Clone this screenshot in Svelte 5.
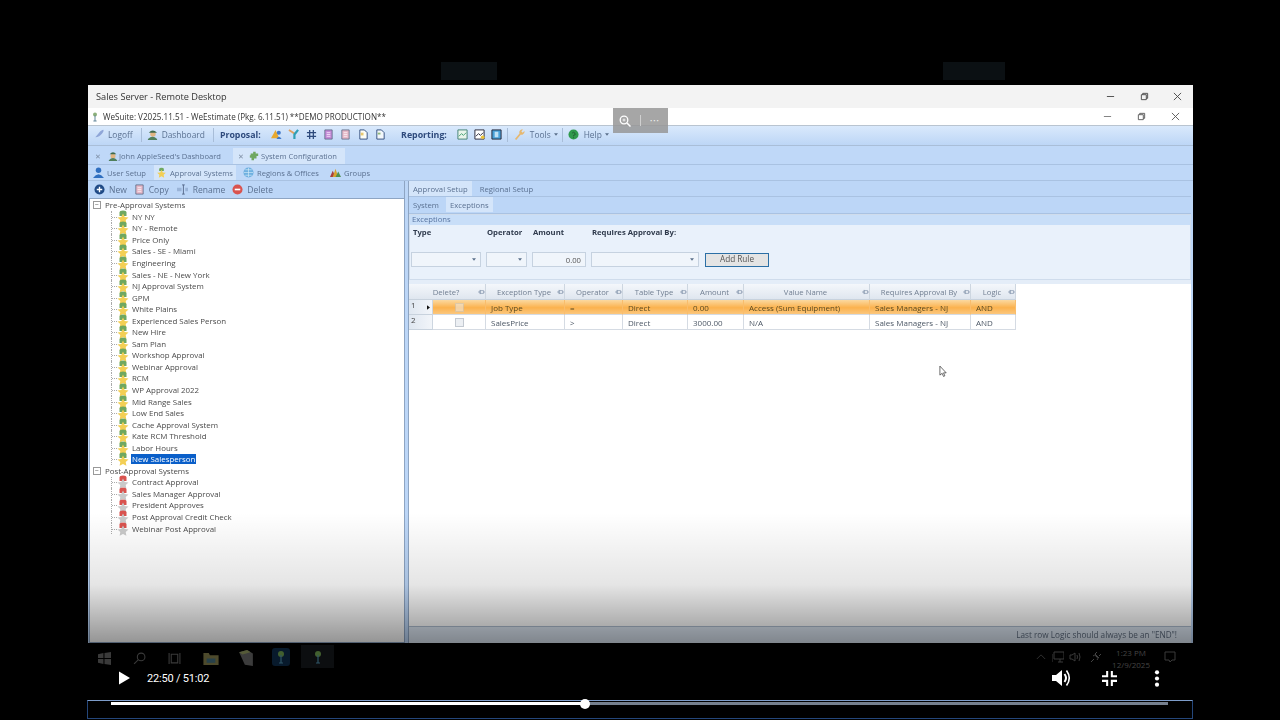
<script lang="ts">
  // Remote desktop video frame: WeSuite approval exceptions screen with player controls on top.
  const preApproval = [
    'NY NY', 'NY - Remote', 'Price Only', 'Sales - SE - Miami', 'Engineering', 'Sales - NE - New York',
    'NJ Approval System', 'GPM', 'White Plains', 'Experienced Sales Person', 'New Hire', 'Sam Plan',
    'Workshop Approval', 'Webinar Approval', 'RCM', 'WP Approval 2022', 'Mid Range Sales', 'Low End Sales',
    'Cache Approval System', 'Kate RCM Threshold', 'Labor Hours', 'New Salesperson',
  ];
  const postApproval = [
    'Contract Approval', 'Sales Manager Approval', 'President Approves', 'Post Approval Credit Check', 'Webinar Post Approval',
  ];
  const columns = [
    { label: 'Delete?', w: 53, first: true },
    { label: 'Exception Type', w: 79 },
    { label: 'Operator', w: 58 },
    { label: 'Table Type', w: 65 },
    { label: 'Amount', w: 56 },
    { label: 'Value Name', w: 126 },
    { label: 'Requires Approval By', w: 101 },
    { label: 'Logic', w: 45 },
  ];
  const rows = [
    ['Job Type', '=', 'Direct', '0.00', 'Access (Sum Equipment)', 'Sales Managers - NJ', 'AND'],
    ['SalesPrice', '>', 'Direct', '3000.00', 'N/A', 'Sales Managers - NJ', 'AND'],
  ];
  const gridCols = '24px ' + columns.map((c) => c.w + 'px').join(' ');
</script>

{#snippet star(top)}
  <svg class="star" viewBox="0 0 12 14" aria-hidden="true">
    <path d="M2.500 6V2.500Q2.500 .5 6 .5t3.500 2V6z" fill={top} />
    <path d="M6 3.500l1.700 3.400 3.800.5-2.800 2.600.7 3.700L6 11.900l-3.400 1.800.7-3.700L.5 7.400l3.800-.5z" fill={top === '#d9534f' ? '#c9c9c9' : '#f3cf55'} />
  </svg>
{/snippet}

{#snippet pin()}
  <svg class="pin" viewBox="0 0 10 8" aria-hidden="true"><path d="M0 4h3M3 2h5v4H3zM3 1v6M8 4h2" fill="none" stroke="#7d8ea5" stroke-width=".9" /></svg>
{/snippet}

{#snippet caret()}
  <svg class="caret" viewBox="0 0 6 4" aria-hidden="true"><path d="M0 0h6L3 4z" fill="#5a6f8a" /></svg>
{/snippet}

{#snippet doc(fill)}
  <svg class="ic" viewBox="0 0 12 12" aria-hidden="true"><path d="M2 1h8v10H2z" fill={fill} stroke="#50607a" stroke-width=".8" /><path d="M4 4h4M4 6h4M4 8h4" stroke="#fff" stroke-width=".7" /></svg>
{/snippet}

<div class="screen">
  <div class="ghosts"><span class="ghost a"></span><span class="ghost b"></span></div>

  <div class="window">
    <div class="rd-title">
      <span>Sales Server - Remote Desktop</span>
      <div class="win-btns first">
        <svg viewBox="0 0 10 10"><path d="M1 5h8" stroke="#444" /></svg>
        <svg viewBox="0 0 10 10"><path d="M1.500 3h5.500v5.500H1.500zM3 3V1.500h5.500V7H7" fill="none" stroke="#444" /></svg>
        <svg viewBox="0 0 10 10"><path d="M1 1l8 8M9 1l-8 8" stroke="#444" /></svg>
      </div>
    </div>

    <div class="app-title">
      <svg class="tree-ic" viewBox="0 0 10 12"><circle cx="5" cy="3" r="2.500" fill="#8cb07a" /><path d="M5 4v7M3 11h4" stroke="#5a7f95" stroke-width="1.200" /></svg>
      <span>WeSuite: V2025.11.51 - WeEstimate (Pkg. 6.11.51) **DEMO PRODUCTION**</span>
      <div class="win-btns second">
        <svg viewBox="0 0 10 10"><path d="M1 5h8" stroke="#777" /></svg>
        <svg viewBox="0 0 10 10"><path d="M1.500 3h5.500v5.500H1.500zM3 3V1.500h5.500V7H7" fill="none" stroke="#555" /></svg>
        <svg viewBox="0 0 10 10"><path d="M1 1l8 8M9 1l-8 8" stroke="#555" /></svg>
      </div>
    </div>

    <div class="toolbar">
      <svg class="ic lead" viewBox="0 0 12 12"><path d="M.5 11.500L8 2.500q3-2.500 3.500-1.500.5 1-1.500 4-3 4-7.500 4z" fill="#8fa6d8" /></svg>
      <span class="tb-text logoff">Logoff</span>
      <i class="sep s1"></i>
      <svg class="ic dash" viewBox="0 0 12 12"><circle cx="6.500" cy="5.500" r="3" fill="#e0b582" /><path d="M1 11q5-5 10 0v1H1z" fill="#4f7f5c" /><path d="M2 4q4-5 9 0z" fill="#3f6a4c" /></svg>
      <span class="tb-text dash-t">Dashboard</span>
      <i class="sep s2"></i>
      <b class="tb-head prop">Proposal:</b>
      <div class="prop-icons">
        <svg class="ic" viewBox="0 0 12 12"><path d="M5 1l4 9H0z" fill="#e8a92f" /><circle cx="8.500" cy="4" r="2.200" fill="#3f78c9" /><path d="M6 11q2.500-5 5.500 0z" fill="#3f78c9" /></svg>
        <svg class="ic" viewBox="0 0 12 12"><path d="M1 1l6 4" stroke="#e0a060" stroke-width="2" /><path d="M11 1L7 6v5" stroke="#2f9fb5" stroke-width="2.400" fill="none" /></svg>
        <svg class="ic" viewBox="0 0 12 12"><path d="M4 1v10M8 1v10M1 4h10M1 8h10" stroke="#2e4a7c" stroke-width="1.400" /></svg>
        {@render doc('#c58ad8')}
        {@render doc('#e6b8c8')}
        <svg class="ic" viewBox="0 0 12 12"><path d="M2 1h5l3 3v7H2z" fill="#fdfdf6" stroke="#2e4a7c" /><path d="M3 4h3v3H3z" fill="#e8c870" /></svg>
        <svg class="ic" viewBox="0 0 12 12"><path d="M2 1h5l3 3v7H2z" fill="#f3f7fb" stroke="#2e4a7c" /><path d="M3 4h3v2H3z" fill="#8fb878" /></svg>
      </div>
      <b class="tb-head rep">Reporting:</b>
      <div class="rep-icons">
        <svg class="ic" viewBox="0 0 12 12"><path d="M1 1h10v10H1z" fill="#e8f4ea" stroke="#3f7f70" /><path d="M2 8l3-3 2 2 3-3" stroke="#3f9f70" fill="none" /></svg>
        <svg class="ic" viewBox="0 0 12 12"><path d="M1 1h10v10H1z" fill="#fff" stroke="#223" /><path d="M2 8l3-3 2 2 3-3" stroke="#223" fill="none" /><circle cx="9.500" cy="9" r="2" fill="#ecc43a" /></svg>
        <svg class="ic" viewBox="0 0 12 12"><path d="M1 1h10v10H1z" fill="#48a0d8" stroke="#223" /><path d="M4 3h4v6H4z" fill="#bfe0f5" /></svg>
      </div>
      <i class="sep s3"></i>
      <svg class="ic tools-ic" viewBox="0 0 12 12"><path d="M1 11l5-6q-1-3 2-4.500l2 0-2 2 1.500 1.500 2-2q.5 3-2 4-1 .5-2 0l-5 6z" fill="#e6b870" /></svg>
      <span class="tb-text tools">Tools</span>
      {@render caret()}
      <i class="sep s4"></i>
      <svg class="ic help-ic" viewBox="0 0 12 12"><circle cx="6" cy="6" r="5.500" fill="#2f9a4d" /><path d="M4.500 4.500q1.500-2 3 0T6 7v1M6 9v1" fill="none" stroke="#1f5a32" /></svg>
      <span class="tb-text help">Help</span>
      {@render caret()}
    </div>

    <div class="doc-tabs">
      <div class="doc-tab one">
        <span class="close">✕</span>
        <svg class="ic sm" viewBox="0 0 12 12"><circle cx="6" cy="6" r="3" fill="#e0b582" /><path d="M1 11q5-5 10 0v1H1z" fill="#4f7f5c" /><path d="M2 4q4-5 8 0z" fill="#3f6a4c" /></svg>
        <span>John AppleSeed's Dashboard</span>
      </div>
      <div class="doc-tab two">
        <span class="close">✕</span>
        <svg class="ic sm" viewBox="0 0 12 12"><path d="M2 3h3V1h3v2h3v3H9v3H6v2H3V8H1V5h1z" fill="#6fa860" /></svg>
        <span>System Configuration</span>
      </div>
    </div>

    <div class="sub-tabs">
      <div class="sub-tab user">
        <svg class="ic" viewBox="0 0 12 12"><circle cx="6" cy="3.500" r="3" fill="#2f6fc0" /><path d="M0 12q6-8 12 0z" fill="#2f6fc0" /></svg>
        <span>User Setup</span>
      </div>
      <div class="sub-tab active">
        <svg class="ic" viewBox="0 0 12 14">
          <path d="M3 5V2.500Q3 1 6 1t3 1.500V5z" fill="#6fa860" />
          <path d="M6 3.500l1.700 3.400 3.800.5-2.800 2.600.7 3.700L6 11.900l-3.400 1.800.7-3.700L.5 7.400l3.800-.5z" fill="#f3cf55" />
        </svg>
        <span>Approval Systems</span>
      </div>
      <div class="sub-tab regions">
        <svg class="ic" viewBox="0 0 12 12"><circle cx="6" cy="6" r="5.500" fill="#6fb0e0" /><path d="M1 6h10M6 1v10M2.500 3h7M2.500 9h7" stroke="#d5ecf8" stroke-width=".7" /></svg>
        <span>Regions &amp; Offices</span>
      </div>
      <div class="sub-tab groups">
        <svg class="ic" viewBox="0 0 12 12"><path d="M0 11l3-7 3 7z" fill="#a83f3f" /><path d="M3 11l3-9 3 9z" fill="#d8a030" /><path d="M6 11l3-6 3 6z" fill="#4f8f4f" /></svg>
        <span>Groups</span>
      </div>
    </div>

    <div class="panes">
      <section class="left">
        <div class="left-tools">
          <svg class="ic" viewBox="0 0 12 12"><circle cx="6" cy="6" r="5.500" fill="#1f4a86" /><path d="M3 6h6M6 3v6" stroke="#fff" stroke-width="1.500" /></svg>
          <span class="lt-new">New</span>
          <span class="lt-ic">{@render doc('#e6b8c8')}</span>
          <span class="lt-copy">Copy</span>
          <svg class="ic lt-ren-ic" viewBox="0 0 12 12"><path d="M0 4h5v4H0zM9 4h3v4H9z" fill="#9ab4d8" /><path d="M7 1v10M5.500 1h3M5.500 11h3" stroke="#54688a" /></svg>
          <span class="lt-ren">Rename</span>
          <svg class="ic lt-del-ic" viewBox="0 0 12 12"><circle cx="6" cy="6" r="5.500" fill="#d9534f" /><path d="M3 6h6" stroke="#fff" stroke-width="1.800" /></svg>
          <span class="lt-del">Delete</span>
        </div>

        <div class="tree">
          <div class="tree-root"><span class="expander">−</span><span>Pre-Approval Systems</span></div>
          {#each preApproval as name}
            <div class="tree-row">
              <i class="branch"></i>
              {@render star('#6fa860')}
              <span class:selected={name === 'New Salesperson'}>{name}</span>
            </div>
          {/each}
          <div class="tree-root"><span class="expander">−</span><span>Post-Approval Systems</span></div>
          {#each postApproval as name}
            <div class="tree-row">
              <i class="branch"></i>
              {@render star('#d9534f')}
              <span>{name}</span>
            </div>
          {/each}
        </div>
      </section>

      <section class="right">
        <div class="right-tabs">
          <span class="rt active">Approval Setup</span>
          <span class="rt">Regional Setup</span>
        </div>
        <div class="right-tabs lower">
          <span class="rt">System</span>
          <span class="rt active">Exceptions</span>
        </div>

        <div class="group">
          <div class="group-title">Exceptions</div>
          <div class="group-labels">
            <b class="l-type">Type</b>
            <b class="l-op">Operator</b>
            <b class="l-am">Amount</b>
            <b class="l-req">Requires Approval By:</b>
          </div>
          <div class="group-inputs">
            <div class="field f-type">{@render caret()}</div>
            <div class="field f-op">{@render caret()}</div>
            <div class="field f-am">0.00</div>
            <div class="field f-req">{@render caret()}</div>
            <div class="add-rule">Add Rule</div>
          </div>
        </div>

        <div class="table-wrap">
          <div class="grid-table" style="grid-template-columns: {gridCols}">
            {#each columns as col}
              <div class="th" class:first={col.first}>
                <span>{col.label}</span>
                {@render pin()}
              </div>
            {/each}
            {#each rows as row, i}
              <div class="row-num">
                <span>{i + 1}</span>
                {#if i === 0}<svg class="arrow" viewBox="0 0 4 6"><path d="M0 0l4 3-4 3z" fill="#111" /></svg>{/if}
              </div>
              <div class="td check" class:hot={i === 0}><i class="box"></i></div>
              {#each row as cell}
                <div class="td" class:hot={i === 0}>{cell}</div>
              {/each}
            {/each}
          </div>
          <svg class="cursor" viewBox="0 0 10 14"><path d="M1 1v10l2.500-2 1.500 3.500 1.500-.7L5 8.500h3z" fill="#fff" stroke="#333" stroke-width=".8" /></svg>
        </div>

        <div class="status">Last row Logic should always be an "END"!</div>
      </section>
    </div>

    <div class="scrim"></div>
  </div>

  <div class="taskbar">
    <svg class="tk win" viewBox="0 0 12 12"><path d="M0 2l5-1v4.500H0zM6 1l6-1v5.500H6zM0 6.500h5V11l-5-1zM6 6.500h6V12l-6-1z" fill="#3a3a3a" /></svg>
    <svg class="tk search" viewBox="0 0 12 12"><circle cx="7.500" cy="4.500" r="3.500" fill="none" stroke="#3a3a3a" /><path d="M5 7l-4 4" stroke="#3a3a3a" /></svg>
    <svg class="tk view" viewBox="0 0 12 12"><path d="M3 2h6v8H3zM1 1v10M11 1v10" fill="none" stroke="#3a3a3a" /></svg>
    <svg class="tk folder" viewBox="0 0 14 12"><path d="M0 1h5l1 2h8v9H0z" fill="#4d4a2c" /><path d="M3 6h8v4H3z" fill="#28414a" /></svg>
    <svg class="tk server" viewBox="0 0 14 14"><path d="M1 2l7-2 5 3v11l-7-1z" fill="#3c3c3c" /><path d="M1 2l7-2 3 2-7 2z" fill="#555a38" /></svg>
    <span class="tk-app"><svg viewBox="0 0 10 14"><circle cx="5" cy="4" r="3" fill="#42602f" /><path d="M5 5v8M3 13h4" stroke="#2f5566" stroke-width="1.200" /></svg></span>
    <span class="tk-app cur"><svg viewBox="0 0 10 14"><circle cx="5" cy="4" r="3" fill="#42602f" /><path d="M5 5v8M3 13h4" stroke="#2f5566" stroke-width="1.200" /></svg></span>
    <div class="tray">
      <svg viewBox="0 0 12 8" class="t-chev"><path d="M1 7l5-5 5 5" fill="none" stroke="#3a3a3a" /></svg>
      <svg viewBox="0 0 12 12" class="t-ic mon"><path d="M2 1h10v7H2zM6 11h5M8 8v3M0 3v8" fill="none" stroke="#3a3a3a" /></svg>
      <svg viewBox="0 0 12 12" class="t-ic spk"><path d="M1 4h2l3-2v8L3 8H1zM8 4q1 2 0 4M10 2q2 4 0 8" fill="none" stroke="#3a3a3a" /></svg>
      <svg viewBox="0 0 12 12" class="t-ic plug"><path d="M1 11l3-3M3 5a2 2 0 0 1 3 0l1 1a2 2 0 0 1 0 3M5 3l2-2M9 5l2-2M5 3l4 4" fill="none" stroke="#444" /></svg>
      <div class="clock"><span>1:23 PM</span><span>12/9/2025</span></div>
      <svg viewBox="0 0 12 12" class="t-ic msg"><path d="M1 1h10v8H8l-2 2-1-2H1z" fill="none" stroke="#3a3a3a" /></svg>
    </div>
  </div>

  <div class="controls">
    <svg class="play" viewBox="0 0 12 14"><path d="M0 0l12 7-12 7z" fill="#fff" /></svg>
    <span class="time">22:50 / 51:02</span>
    <svg class="volume" viewBox="0 0 20 20"><path d="M1 7h4l6-5v16l-6-5H1z" fill="#fff" /><path d="M13.500 6q3 4 0 8" fill="none" stroke="#fff" stroke-width="2" /><path d="M15.500 2.500q5.500 7.500 0 15" fill="none" stroke="#fff" stroke-width="1.600" /></svg>
    <svg class="shrink" viewBox="0 0 16 16"><path d="M5.500 0v5.500H0M10.500 0v5.500H16M5.500 16v-5.500H0M10.500 16v-5.500H16" fill="none" stroke="#fff" stroke-width="2.200" /></svg>
    <svg class="more" viewBox="0 0 6 18"><circle cx="3" cy="2.500" r="2.200" fill="#fff" /><circle cx="3" cy="9" r="2.200" fill="#fff" /><circle cx="3" cy="15.500" r="2.200" fill="#fff" /></svg>
  </div>

  <div class="scrub-box">
    <div class="track">
      <div class="played"></div>
      <div class="thumb"></div>
    </div>
  </div>

  <div class="zoom-hud">
    <svg viewBox="0 0 12 12"><circle cx="5" cy="5" r="3.800" fill="none" stroke="#fff" stroke-width="1.300" /><path d="M8 8l3.500 3.500" stroke="#fff" stroke-width="1.500" /><path d="M3.500 5h3M5 3.500v3" stroke="#fff" stroke-width=".8" /></svg>
    <i></i>
    <span>•••</span>
  </div>
</div>

<style>
  :global(body) {
    margin: 0;
    background: #000;
  }

  .screen {
    position: relative;
    width: 1280px;
    height: 720px;
    overflow: hidden;
    background: #000;
    font-family: "Open Sans", "Noto Sans", sans-serif;
  }

  .ghosts {
    display: flex;
    padding-top: 62px;
    height: 23px;
  }
  .ghost { height: 18px; background: #0b1013; }
  .ghost.a { width: 56px; margin-left: 441px; }
  .ghost.b { width: 62px; margin-left: 446px; }

  .window {
    position: relative;
    width: 1105px;
    height: 558px;
    margin-left: 88px;
    display: flex;
    flex-direction: column;
    overflow: hidden;
    background: #bcd6f7;
    color: #4a5f7d;
    filter: blur(0.25px);
  }

  .scrim {
    position: absolute;
    left: 0;
    right: 0;
    bottom: 0;
    height: 130px;
    background: linear-gradient(to bottom, rgba(0, 0, 0, 0), rgba(0, 0, 0, 0.1) 55%, rgba(0, 0, 0, 0.42));
    pointer-events: none;
  }

  .rd-title {
    flex: none;
    height: 23px;
    display: flex;
    align-items: center;
    padding-left: 8px;
    background: #f3f3f3;
    color: #333;
    font-size: 9.2px;
  }

  .win-btns {
    margin-left: auto;
    display: flex;
  }
  .win-btns svg { width: 9px; height: 9px; }
  .win-btns.first { gap: 24.500px; padding-right: 11px; }
  .win-btns.second { gap: 25px; padding-right: 13px; }

  .app-title {
    flex: none;
    height: 18px;
    display: flex;
    align-items: center;
    background: #fff;
    border-bottom: 1px solid #b9c4d0;
    box-sizing: border-box;
    color: #333;
    font-size: 8.100px;
  }
  .tree-ic { width: 8px; height: 10px; margin: 0 4px 0 3px; }

  .toolbar {
    flex: none;
    height: 20px;
    display: flex;
    align-items: center;
    padding-left: 5px;
    padding-bottom: 2px;
    box-sizing: border-box;
    background: linear-gradient(to bottom, #d9e9fc, #bdd6f6);
    border-bottom: 1px solid #a9bed8;
    font-size: 8.400px;
  }
  .ic { width: 11px; height: 11px; flex: none; }
  .ic.sm { width: 10px; height: 10px; }
  .sep { width: 1px; height: 14px; background: #a8bdd8; flex: none; }
  .tb-text { color: #5b7191; }
  .tb-head { color: #2e4a7c; font-size: 8.800px; }
  .logoff { margin-left: 4px; }
  .s1 { margin-left: 8px; }
  .dash { margin-left: 5px; }
  .dash-t { margin-left: 4px; }
  .s2 { margin-left: 8px; }
  .prop { margin-left: 6px; }
  .prop-icons { display: flex; gap: 6.400px; margin-left: 10px; }
  .rep { margin-left: 15px; }
  .rep-icons { display: flex; gap: 6px; margin-left: 10px; }
  .s3 { margin-left: 5px; }
  .tools-ic { margin-left: 6px; }
  .tools { margin-left: 5px; }
  .caret { width: 4px; height: 3px; margin-left: 3px; flex: none; }
  .s4 { margin-left: 4px; }
  .help-ic { margin-left: 5px; }
  .help { margin-left: 5px; }

  .doc-tabs {
    flex: none;
    height: 19px;
    display: flex;
    align-items: flex-end;
    box-sizing: border-box;
    border-bottom: 1px solid #a9c2e2;
    background: #bfd8f8;
    font-size: 7.600px;
    color: #5b7191;
  }
  .doc-tab {
    height: 16px;
    display: flex;
    align-items: center;
    box-sizing: border-box;
    white-space: nowrap;
  }
  .doc-tab.one { width: 145px; padding-left: 7px; }
  .doc-tab.two { width: 112px; padding-left: 5px; background: #d4e5fa; }
  .close { font-size: 7px; color: #7e8ea5; margin-right: 5px; width: 8px; }
  .doc-tab.one .ic { margin-right: 1px; }
  .doc-tab.two .close { margin-right: 3px; }
  .doc-tab.two .ic { margin-right: 2px; }

  .sub-tabs {
    flex: none;
    height: 16px;
    display: flex;
    align-items: stretch;
    background: #bfd8f8;
    border-bottom: 1px solid #a9c2e2;
    box-sizing: border-box;
    font-size: 7.600px;
    color: #5b7191;
    white-space: nowrap;
  }
  .sub-tab {
    display: flex;
    align-items: center;
    gap: 3px;
    box-sizing: border-box;
  }
  .sub-tab.user { width: 66px; padding-left: 5px; }
  .sub-tab.active { width: 82px; padding-left: 2px; background: #d4e5fa; }
  .sub-tab.regions { width: 91px; padding-left: 7px; }
  .sub-tab.groups { padding-left: 3px; }

  .panes {
    flex: 1;
    min-height: 0;
    display: flex;
    gap: 4px;
    padding: 0 2px 0 1px;
  }

  .left {
    width: 315px;
    flex: none;
    display: flex;
    flex-direction: column;
    border-right: 1px solid #8ea5c3;
  }
  .left-tools {
    flex: none;
    height: 17px;
    display: flex;
    align-items: center;
    padding-left: 5px;
    font-size: 8.500px;
    color: #5b7191;
  }
  .lt-new { margin-left: 4px; }
  .lt-ic { margin-left: 7px; display: flex; }
  .lt-copy { margin-left: 4px; }
  .lt-ren-ic { margin-left: 8px; }
  .lt-ren { margin-left: 5px; }
  .lt-del-ic { margin-left: 7px; }
  .lt-del { margin-left: 4px; }

  .tree {
    flex: 1;
    background: #fff;
    border: 1px solid #8ea5c3;
    border-right: none;
    padding-top: 0.500px;
    font-size: 7.900px;
    color: #4a4a4a;
  }
  .tree-root, .tree-row {
    height: 11.550px;
    display: flex;
    align-items: center;
    white-space: nowrap;
  }
  .tree-root { padding-left: 3px; gap: 4px; }
  .expander {
    width: 6px;
    height: 6px;
    border: 1px solid #999;
    font-size: 7px;
    line-height: 6px;
    text-align: center;
    color: #555;
  }
  .tree-row { padding-left: 21px; }
  .branch {
    position: relative;
    align-self: stretch;
    width: 5px;
    border-left: 1px dotted #aaa;
    flex: none;
  }
  .branch::after {
    content: "";
    position: absolute;
    left: 0;
    right: 0;
    top: 50%;
    border-top: 1px dotted #aaa;
  }
  .star { width: 12px; height: 14px; flex: none; margin-right: 3px; }
  .selected {
    background: #0a5fc9;
    color: #fff;
    padding: 0 1px;
    margin-left: -1px;
  }

  .right {
    flex: 1;
    min-width: 0;
    display: flex;
    flex-direction: column;
    border-left: 1px solid #8ea5c3;
    margin-left: -1px;
    font-size: 7.700px;
    color: #5b7191;
  }
  .right-tabs {
    flex: none;
    height: 15px;
    display: flex;
    align-items: stretch;
    border-bottom: 1px solid #a9c2e2;
  }
  .right-tabs.lower { height: 17px; padding-bottom: 1px; box-sizing: border-box; }
  .rt {
    display: flex;
    align-items: center;
    padding: 0 4px;
    margin-right: 1px;
  }
  .right-tabs:first-child .rt:last-child { margin-left: 3px; }
  .right-tabs.lower .rt:last-child { margin-left: 2px; }
  .rt.active { background: #d4e5fa; }

  .group {
    flex: none;
    height: 66px;
    display: flex;
    flex-direction: column;
    background: #e9f1fb;
    border: 1px solid #cfdcec;
    box-sizing: border-box;
  }
  .group-title {
    height: 10px;
    line-height: 9px;
    padding-left: 2px;
    background: #c8def8;
    color: #5773a0;
    font-size: 7.700px;
  }
  .group-labels {
    height: 13px;
    display: flex;
    align-items: center;
    font-size: 7.700px;
    color: #2f3a4c;
  }
  .l-type { margin-left: 3px; width: 74px; }
  .l-op { width: 46px; }
  .l-am { width: 59px; }
  .group-inputs {
    display: flex;
    margin-top: 14px;
    align-items: center;
    padding-left: 1px;
    gap: 5px;
  }
  .field {
    height: 15px;
    box-sizing: border-box;
    border: 1px solid #c6d2e0;
    background: #f0f5fb;
    display: flex;
    align-items: center;
    justify-content: flex-end;
    padding-right: 4px;
    color: #555;
  }
  .f-type { width: 70px; }
  .f-op { width: 41px; }
  .f-am { width: 54px; }
  .f-req { width: 108px; }
  .add-rule {
    width: 64px;
    height: 14px;
    box-sizing: border-box;
    margin-left: 1px;
    border: 1.500px solid #2c6fa5;
    background: #e4e4e4;
    color: #555;
    text-align: center;
    line-height: 10px;
    font-size: 8.200px;
  }

  .table-wrap {
    position: relative;
    flex: 1;
    min-height: 0;
    background: #fff;
    border-top: 4px solid #e4edf8;
    font-size: 8px;
  }
  .grid-table {
    display: grid;
    grid-template-rows: 16px 15px 15px;
    width: max-content;
  }
  .th {
    display: flex;
    align-items: center;
    box-sizing: border-box;
    padding: 0 0 0 5px;
    background: linear-gradient(to bottom, #f4f7fb, #dfe6ef);
    border-right: 1px solid #cdd6e0;
    border-bottom: 1px solid #c8d2dd;
    color: #717f92;
    font-size: 7.700px;
  }
  .th.first { grid-column: span 2; }
  .th span { flex: 1; text-align: center; white-space: nowrap; }
  .pin { width: 7px; height: 6px; flex: none; }
  .row-num {
    display: flex;
    align-items: flex-start;
    box-sizing: border-box;
    padding-left: 2px;
    background: linear-gradient(to right, #dfe7f1, #f2f5f9);
    border-bottom: 1px solid #c8d2dd;
    border-right: 1px solid #cdd6e0;
    color: #444;
    line-height: 10px;
    position: relative;
  }
  .arrow { position: absolute; right: 2px; top: 5px; width: 3px; height: 5px; }
  .td {
    display: flex;
    align-items: center;
    box-sizing: border-box;
    padding-left: 5px;
    white-space: nowrap;
    border-right: 1px solid #d5dbe3;
    border-bottom: 1px solid #d5dbe3;
    color: #4d5866;
  }
  .td.hot {
    background: linear-gradient(to bottom, #fbd9a0, #fbb24e 55%, #fbc77e);
    border-right-color: #f9bd6c;
    color: #5a4a20;
  }
  .td.check { justify-content: center; padding-left: 0; }
  .box {
    width: 7px;
    height: 7px;
    border: 1px solid #c3c9d1;
    background: #eceff3;
  }
  .td.hot .box { opacity: 0.5; }
  .cursor {
    position: absolute;
    left: 530px;
    top: 81px;
    width: 9px;
    height: 13px;
  }

  .status {
    flex: none;
    height: 16px;
    line-height: 16px;
    text-align: right;
    padding-right: 14px;
    background: #dde7f3;
    border-top: 1px solid #aebdd0;
    font-size: 8.200px;
    color: #5c6a7d;
  }

  .taskbar {
    display: flex;
    align-items: flex-start;
    height: 28px;
    padding-top: 2px;
    box-sizing: border-box;
  }
  .tk { flex: none; height: 13px; width: 13px; margin-top: 7px; }
  .tk.win { margin-left: 98px; }
  .tk.search { margin-left: 22px; }
  .tk.view { margin-left: 22px; }
  .tk.folder { margin-left: 22px; width: 16px; }
  .tk.server { margin-left: 19px; width: 16px; height: 16px; margin-top: 5px; }
  .tk-app {
    flex: none;
    width: 33px;
    height: 23px;
    margin-left: 10px;
    display: flex;
    align-items: center;
    justify-content: center;
  }
  .tk-app.cur { background: #0c0e10; margin-left: 4px; }
  .tk-app svg { width: 10px; height: 14px; }
  .tk-app:not(.cur) svg { background: #081a2c; padding: 2px 4px; box-sizing: content-box; border-radius: 3px; }
  .tray {
    margin-left: auto;
    margin-right: 104px;
    display: flex;
    align-items: flex-start;
    color: #444;
    font-size: 8px;
  }
  .t-chev { width: 10px; height: 7px; margin-top: 8px; }
  .t-ic { width: 12px; height: 12px; margin-top: 6px; }
  .mon { margin-left: 6px; }
  .spk { margin-left: 5px; }
  .plug { margin-left: 9px; }
  .clock {
    display: flex;
    flex-direction: column;
    align-items: center;
    height: 22px;
    overflow: hidden;
    line-height: 12px;
    margin: 2px 14px 0 10px;
  }

  .controls {
    position: absolute;
    left: 0;
    right: 0;
    top: 668px;
    height: 20px;
    display: flex;
    align-items: center;
    color: #fff;
  }
  .play { width: 11px; height: 14px; margin-left: 119px; flex: none; }
  .time { margin-left: 17px; font-family: Roboto, "Liberation Sans", sans-serif; font-size: 11px; letter-spacing: -0.200px; }
  .volume { width: 20px; height: 20px; margin-left: auto; flex: none; }
  .shrink { width: 15px; height: 15px; margin-left: 31px; flex: none; }
  .more { width: 6px; height: 17px; margin-left: 37px; margin-right: 120px; flex: none; }

  .scrub-box {
    position: absolute;
    left: 87px;
    top: 700px;
    width: 1106px;
    height: 19px;
    box-sizing: border-box;
    border: 1px solid #24467a;
    border-top-color: #7d9cc9;
  }
  .track {
    position: relative;
    height: 3px;
    margin: 1px 24px 0 23px;
    background: #76808e;
  }
  .played {
    width: 474px;
    height: 3px;
    background: #fff;
  }
  .thumb {
    position: absolute;
    left: 469px;
    top: -3px;
    width: 10px;
    height: 10px;
    border-radius: 50%;
    background: #fff;
  }

  .zoom-hud {
    position: absolute;
    left: 613px;
    top: 108px;
    width: 55px;
    height: 25px;
    display: flex;
    align-items: center;
    background: rgba(150, 150, 150, 0.85);
    color: #eee;
    font-size: 6px;
    letter-spacing: 1px;
  }
  .zoom-hud svg { width: 12px; height: 12px; margin-left: 6px; }
  .zoom-hud i { width: 1px; height: 11px; background: #d0d0d0; margin: 0 9px; }
</style>
